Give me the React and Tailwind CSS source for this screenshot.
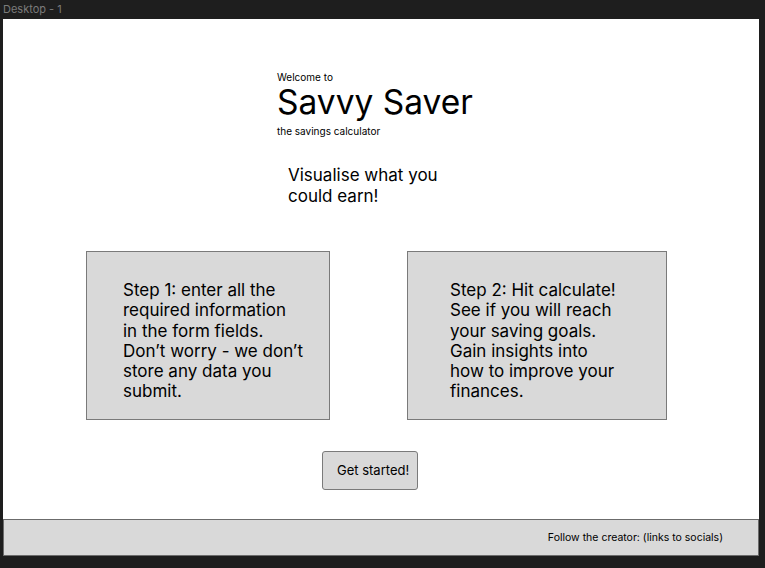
export default function App() {
  return (
    <div className="w-[765px] h-[568px] bg-[#1e1e1e] overflow-hidden" style={{ fontFamily: "Inter, 'Noto Sans', sans-serif" }}>
      <div className="h-[19px] pl-[3px] text-[11px] leading-[19px] text-[#7b7b7b]">Desktop - 1</div>
      <div className="ml-[3px] w-[756px] h-[537px] bg-white flex flex-col">
        <div className="flex-1 flex flex-col">
          <div className="ml-[274px] mt-[52px] flex flex-col text-black">
            <div className="text-[10px] leading-[12px]">Welcome to</div>
            <div className="text-[33.5px] leading-[40px] -mt-[1px]">Savvy Saver</div>
            <div className="text-[10px] leading-[12px] mt-[3px]">the savings calculator</div>
          </div>
          <div className="ml-[285px] mt-[28px] text-[17px] leading-[20.5px] text-black">
            Visualise what you<br />could earn!
          </div>
          <div className="flex mt-[45px] ml-[83px] gap-[77px]">
            <div className="w-[244px] h-[169px] bg-[#d9d9d9] border border-[#7a7a7a] pl-[36px] pt-[28px] text-[17px] leading-[20.3px] text-black">
              Step 1: enter all the<br />required information<br />in the form fields.<br />Don’t worry - we don’t<br />store any data you<br />submit.
            </div>
            <div className="w-[260px] h-[169px] bg-[#d9d9d9] border border-[#7a7a7a] pl-[42px] pt-[28px] text-[17px] leading-[20.3px] text-black">
              Step 2: Hit calculate!<br />See if you will reach<br />your saving goals.<br />Gain insights into<br />how to improve your<br />finances.
            </div>
          </div>
          <div className="ml-[319px] mt-[31px]">
            <div className="w-[96px] h-[39px] bg-[#d9d9d9] border border-[#7a7a7a] rounded-[3px] flex items-center pl-[14px] text-[13px] text-black">
              Get started!
            </div>
          </div>
        </div>
        <div className="h-[37px] bg-[#d9d9d9] border border-[#6b6b6b] flex items-center justify-end pr-[35px] text-[10.5px] text-black">
          Follow the creator: (links to socials)
        </div>
      </div>
    </div>
  );
}
